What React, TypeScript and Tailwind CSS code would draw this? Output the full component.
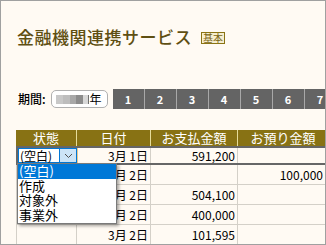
const font = { fontFamily: '"Noto Sans CJK JP", "Liberation Sans", sans-serif' };

const rows = [
  { date: '3月 2日', pay: '', dep: '100,000' },
  { date: '3月 2日', pay: '504,100', dep: '' },
  { date: '3月 2日', pay: '400,000', dep: '' },
  { date: '3月 2日', pay: '101,595', dep: '' },
];

const App = () => {
  return (
    <div
      className="relative w-[326px] h-[245px] overflow-hidden border border-[#a0a0a0] bg-[#fffaf3] text-black"
      style={font}
    >
      {/* タイトル */}
      <div className="flex items-center pl-[16px] pt-[26px] h-[46px]">
        <h1 className="shrink-0 text-[17px] leading-[20px] font-medium text-[#5f4f12] tracking-[0.5px]">金融機関連携サービス</h1>
        <span className="ml-[9px] mt-[2px] shrink-0 flex items-center justify-center w-[24px] h-[12px] border border-[#8a7314] bg-[#f6eed0] text-[10px] leading-[10px] text-[#7a6515]">
          基本
        </span>
      </div>

      {/* 期間 */}
      <div className="flex items-center mt-[42px] pl-[17px] h-[20px]">
        <span className="shrink-0 text-[12px] font-medium leading-[12px]">期間:</span>
        <div className="ml-[5px] shrink-0 flex items-center w-[57px] h-[18px] rounded-[5px] border border-[#b0b0b0] bg-white pl-[4px]">
          <div className="flex h-[9px]">
            <div className="w-[7px] bg-[#c8c8c8]" />
            <div className="w-[7px] bg-[#bdbdbd]" />
            <div className="w-[6px] bg-[#a8a8a8]" />
            <div className="w-[7px] bg-[#8c8c8c]" />
            <div className="w-[5px] bg-[#d8d8d8]" />
            <div className="w-[1px] bg-[#707070]" />
          </div>
          <span className="ml-[1px] text-[12px] leading-[12px]">年</span>
        </div>
        <div className="ml-[5px] shrink-0 flex h-[20px] bg-[#646464]">
          {[1, 2, 3, 4, 5, 6, 7].map((n) => (
            <div
              key={n}
              className="w-[32px] shrink-0 flex items-center justify-center border-r border-[#a8a8a8] text-white text-[11px] font-bold"
            >
              {n}
            </div>
          ))}
        </div>
      </div>

      {/* 表 */}
      <div className="ml-[15px] mt-[21px] w-[340px] text-[12px]">
        <div className="flex h-[16px] bg-[#887214] text-white text-[13px] leading-[16px]">
          <div className="w-[61px] shrink-0 text-center border-r border-[#e6dc9a]">状態</div>
          <div className="w-[74px] shrink-0 text-center border-r border-[#e6dc9a]">日付</div>
          <div className="w-[87px] shrink-0 text-center border-r border-[#e6dc9a]">お支払金額</div>
          <div className="w-[90px] shrink-0 text-center">お預り金額</div>
        </div>

        {/* 編集中の行 */}
        <div className="flex h-[19px] border-y-2 border-l-2 border-[#666666] bg-[#fffaf3]">
          <div className="w-[59px] shrink-0 flex items-center">
            <div className="flex w-[59px] h-[15px] border border-[#0078d7] bg-white">
              <span className="flex-1 text-[12px] leading-[13px] pl-[1px]">(空白)</span>
              <div className="w-[17px] flex items-center justify-center bg-[#cce4f7] border-l border-[#0078d7]">
                <svg width="9" height="6" viewBox="0 0 9 6" fill="none">
                  <path d="M1 1l3.5 3.5L8 1" stroke="#505050" strokeWidth="1" />
                </svg>
              </div>
            </div>
          </div>
          <div className="w-[74px] shrink-0 border-l border-[#e8c890] border-r border-r-[#d4d0c8] text-right pr-[2px] leading-[15px]">
            3月 1日
          </div>
          <div className="w-[87px] shrink-0 border-r border-[#d4d0c8] text-right pr-[2px] leading-[15px]">591,200</div>
          <div className="w-[90px] shrink-0" />
        </div>

        {rows.map((r, i) => (
          <div key={i} className="flex h-[20px] border-b border-l border-[#d4d0c8] leading-[19px]">
            <div className="w-[60px] shrink-0 border-r border-[#d4d0c8]" />
            <div className="w-[74px] shrink-0 border-r border-[#d4d0c8] text-right pr-[2px]">{r.date}</div>
            <div className="w-[87px] shrink-0 border-r border-[#d4d0c8] text-right pr-[2px]">{r.pay}</div>
            <div className="w-[88px] shrink-0 border-r border-[#d4d0c8] text-right pr-[2px]">{r.dep}</div>
          </div>
        ))}
      </div>

      {/* ドロップダウン */}
      <div className="absolute left-[16px] top-[162px] w-[100px] border border-[#7a7a7a] bg-white shadow-[2px_2px_3px_rgba(0,0,0,0.35)] text-[13px] leading-[14.5px]">
        <div className="bg-[#0078d7] text-white pl-[1px]">(空白)</div>
        <div className="pl-[1px]">作成</div>
        <div className="pl-[1px]">対象外</div>
        <div className="pl-[1px] pb-[1px]">事業外</div>
      </div>
    </div>
  );
};

export default App;
